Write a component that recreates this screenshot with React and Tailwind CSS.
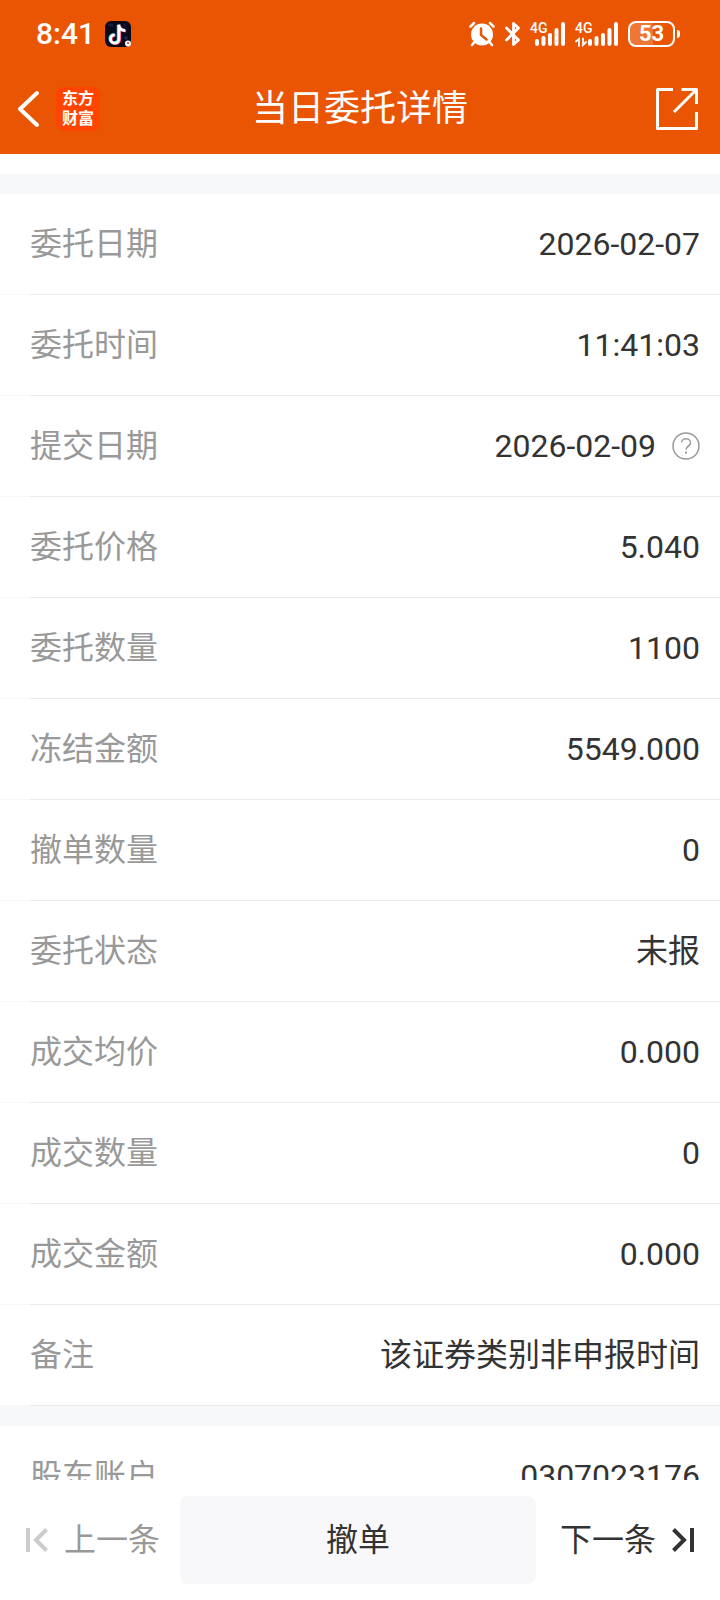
const orderRows = [
    { label: "委托日期", value: "2026-02-07" },
    { label: "委托时间", value: "11:41:03" },
    { label: "提交日期", value: "2026-02-09", help: true },
    { label: "委托价格", value: "5.040" },
    { label: "委托数量", value: "1100" },
    { label: "冻结金额", value: "5549.000" },
    { label: "撤单数量", value: "0" },
    { label: "委托状态", value: "未报" },
    { label: "成交均价", value: "0.000" },
    { label: "成交数量", value: "0" },
    { label: "成交金额", value: "0.000" },
    { label: "备注", value: "该证券类别非申报时间" },
]

const accountRows = [{ label: "股东账户", value: "0307023176" }]

const TikTokBadge = () => (
    <svg className="h-[26px] w-[26px]" viewBox="0 0 26 26" fill="none">
        <rect width="26" height="26" rx="6" fill="#0b0a1c" />
        <path d="M3 4h3M7 3v3M19 3l2 2M19 17h4M21 15v4" stroke="#2c2a6b" />
        <path d="M13.2 4v13.500a4.200 4.200 0 1 1-4.200-4.200M13.200 4c.4 3 2.600 5 6.300 5.200" stroke="#25e5e5" strokeWidth="2.800" />
        <path d="M14.800 5v13.500a4.200 4.200 0 1 1-4.200-4.200M14.800 5c.4 3 2.600 5 6.300 5.200" stroke="#fe2c55" strokeWidth="2.800" />
        <path d="M14 3.500V18a4.200 4.200 0 1 1-4.200-4.200M14 4.500c.4 3 2.600 5 6.300 5.200" stroke="#fff" strokeWidth="2.800" />
        <circle cx="23" cy="22.500" r="3" fill="#fff" />
        <circle cx="23" cy="22" r="1" fill="#c33" />
    </svg>
)

const AlarmIcon = () => (
    <svg className="h-[26px] w-[26px]" viewBox="0 0 26 26" fill="none" strokeLinecap="round">
        <circle cx="13" cy="13.500" r="11" fill="#fff" />
        <path d="M1.500 5.500 5 2M24.500 5.500 21 2M5 21.500 3 24M21 21.500l2 2.500" stroke="#fff" strokeWidth="2.500" />
        <path d="M12 7.500v6.500l5.500 4.500" stroke="#ea5504" strokeWidth="2.500" />
    </svg>
)

const BluetoothIcon = () => (
    <svg className="h-[26px] w-[15px]" viewBox="0 0 15 26" fill="none" stroke="#fff" strokeWidth="2.800" strokeLinejoin="round" strokeLinecap="round">
        <path d="M1.500 7 13.500 19l-5 4.500V2.500l5 4.500L1.500 19" />
    </svg>
)

const Signal = ({ data }) => (
    <div className={data ? "relative h-[26px] w-[43px]" : "relative h-[26px] w-[35px]"}>
        <svg className="h-full w-full" viewBox={data ? "0 0 43 26" : "0 0 35 26"} stroke="#fff" strokeWidth="4" strokeLinecap="round">
            {data ? (
                <>
                    <path d="M15 20v3M21.500 17v6M28 14v9M34.500 9v14M41 3v20" />
                    <path d="M1 20.500 4 18v7M8 17.500V24l3-3" fill="none" strokeWidth="1.800" />
                </>
            ) : (
                <path d="M7 20v3M13.500 17v6M20 14v9M26.500 9v14M33 3v20" />
            )}
        </svg>
        <span className="absolute top-0 left-0 text-sm leading-[14px] font-medium">4G</span>
    </div>
)

const Battery = () => (
    <div className="flex items-center gap-0.5">
        <div className="flex h-[26px] w-[47px] items-center justify-center rounded-lg border-2 border-white bg-linear-to-r from-white/20 from-53% to-transparent to-53% text-[22px] leading-6 font-bold">
            53
        </div>
        <div className="h-2 w-[3px] rounded-r bg-white" />
    </div>
)

const StatusBar = () => (
    <div className="flex h-16 items-center justify-between pt-1 pr-10 pl-9">
        <div className="flex items-center gap-2.5">
            <span className="text-[30px] leading-none font-medium">8:41</span>
            <TikTokBadge />
        </div>
        <div className="flex items-center gap-2.5">
            <AlarmIcon />
            <BluetoothIcon />
            <Signal />
            <Signal data />
            <Battery />
        </div>
    </div>
)

const NavBar = () => (
    <div className="grid h-[90px] grid-cols-[1fr_auto_1fr] items-center px-[22px]">
        <div className="-ml-1.5 flex items-center gap-4">
            <button aria-label="返回">
                <svg className="h-10 w-6" viewBox="0 0 24 40" fill="none" stroke="#fff" strokeWidth="4" strokeLinecap="round" strokeLinejoin="round">
                    <path d="M21 4 4 20l17 16" />
                </svg>
            </button>
            <div className="flex h-11 w-11 flex-col items-center justify-center rounded-lg bg-[#ff4400] text-base leading-5 font-bold">
                <span>东方</span>
                <span>财富</span>
            </div>
        </div>
        <h1 className="text-4xl leading-none">当日委托详情</h1>
        <button className="justify-self-end" aria-label="分享">
            <svg className="h-[42px] w-[42px]" viewBox="0 0 42 42" fill="none" stroke="#fff" strokeWidth="3" strokeLinejoin="round">
                <path d="M17 1.500H1.500v39h39V24M25.500 1.500h15V16M40.500 1.500 18 24" />
            </svg>
        </button>
    </div>
)

const DetailRow = ({ label, value, help }) => (
    <div className="relative flex h-[101px] items-center justify-between border-b border-[#f7f8fa] pr-5 pl-[30px] text-[32px] leading-none after:absolute after:right-0 after:-bottom-px after:left-[30px] after:h-px after:bg-[#ebebeb]">
        <dt className="text-[#999999]">{label}</dt>
        <dd className="flex items-center gap-4">
            {value}
            {help && (
                <button aria-label="说明">
                    <svg className="h-7 w-7" viewBox="0 0 28 28" fill="none" stroke="#999" strokeWidth="1.500">
                        <circle cx="14" cy="14" r="13" />
                        <path d="M9.500 10.500a4.500 4 0 1 1 7 3.500c-1.700 1.100-2.500 1.800-2.500 3.800" />
                        <path d="M14 19.500v2" strokeWidth="2" />
                    </svg>
                </button>
            )}
        </dd>
    </div>
)

const FooterBar = () => (
    <footer className="flex h-[120px] shrink-0 items-center bg-white text-[32px] leading-none">
        <button className="flex h-[88px] items-center gap-4 pr-5 pl-6 text-[#999999]">
            <svg className="h-6 w-6" viewBox="0 0 24 24" fill="none" stroke="#ccc" strokeWidth="4">
                <path d="M4 0v24M22.500 1.500 12 12l10.500 10.500" />
            </svg>
            上一条
        </button>
        <button className="h-[88px] flex-1 rounded-lg bg-[#f8f8fa]">撤单</button>
        <button className="flex h-[88px] items-center gap-4 px-6">
            下一条
            <svg className="h-6 w-6" viewBox="0 0 24 24" fill="none" stroke="#333" strokeWidth="4">
                <path d="M20 0v24M1.500 1.500 12 12 1.500 22.500" />
            </svg>
        </button>
    </footer>
)

const App = () => {
    return (
        <div className="flex h-screen flex-col bg-white font-[Roboto,'Noto_Sans_CJK_SC',sans-serif] text-[#333333]">
            <header className="shrink-0 bg-[#ea5504] text-white">
                <StatusBar />
                <NavBar />
            </header>

            <main className="min-h-0 flex-1 overflow-hidden pt-5">
                <dl className="border-t-20 border-[#f7f8fa]">
                    {orderRows.map((row) => <DetailRow key={row.label} {...row} />)}
                </dl>
                <dl className="border-t-20 border-[#f7f8fa]">
                    {accountRows.map((row) => <DetailRow key={row.label} {...row} />)}
                </dl>
            </main>

            <FooterBar />
        </div>
    )
}

export default App
